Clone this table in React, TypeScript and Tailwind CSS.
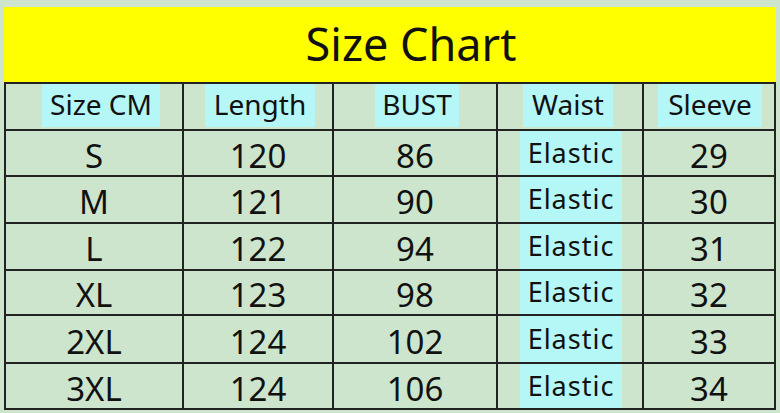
import { Fragment } from 'react'

const headers = [
  { label: 'Size CM', box: 'w-[118px] ml-[14px]' },
  { label: 'Length', box: 'w-[110px] ml-[4px]' },
  { label: 'BUST', box: 'w-[84px] ml-[4px]' },
  { label: 'Waist', box: 'w-[90px] -ml-[4px]' },
  { label: 'Sleeve', box: 'w-[104px] ml-[2px]' },
]

const rows = [
  ['S', '120', '86', '29'],
  ['M', '121', '90', '30'],
  ['L', '122', '94', '31'],
  ['XL', '123', '98', '32'],
  ['2XL', '124', '102', '33'],
  ['3XL', '124', '106', '34'],
]

const cell = 'bg-[#cde5cd] flex items-center justify-center text-[33px] leading-none pt-[4px]'

export default function App() {
  return (
    <div
      className="w-[780px] h-[413px] bg-[#cde5cd] pt-[7px] px-[4px] text-[#111]"
      style={{ fontFamily: '"Noto Sans", "Open Sans", sans-serif' }}
    >
      <div className="h-[75px] bg-[#ffff00] flex items-center justify-center pl-[42px] text-[45px] leading-none pb-[2px]">
        Size Chart
      </div>
      <div className="border-2 border-[#222] bg-[#222] grid grid-cols-[176px_148px_162px_144px_130px] grid-rows-[45px_44px_45px_45px_43px_46px_44px] gap-[2px]">
        {headers.map((h) => (
          <div key={h.label} className="bg-[#cde5cd] flex justify-center items-start">
            <span className={`${h.box} h-[43px] bg-[#b5f6f6] flex items-center justify-center text-[28px] leading-none pb-[3px]`}>
              {h.label}
            </span>
          </div>
        ))}
        {rows.map((r) => (
          <Fragment key={r[0]}>
            <div className={cell}>{r[0]}</div>
            <div className={cell}>{r[1]}</div>
            <div className={cell}>{r[2]}</div>
            <div className="bg-[#cde5cd] flex justify-center">
              <span className="w-[102px] ml-[2px] h-full bg-[#b5f6f6] flex items-center justify-center text-[27px] tracking-[1px] leading-none pb-[2px]">
                Elastic
              </span>
            </div>
            <div className={cell}>{r[3]}</div>
          </Fragment>
        ))}
      </div>
    </div>
  )
}
